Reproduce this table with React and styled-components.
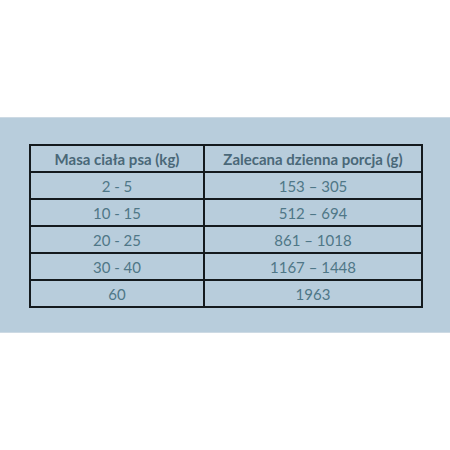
import styled, { createGlobalStyle } from "styled-components";

const GlobalStyle = createGlobalStyle`
  html, body {
    margin: 0;
    padding: 0;
    background: #ffffff;
  }
`;

const Page = styled.div`
  width: 450px;
  height: 450px;
  padding-top: 117px;
  box-sizing: border-box;
  background: #ffffff;
`;

const Band = styled.div`
  background: #b8cddc;
  border-top: 1px solid #cddae4;
  border-bottom: 1px solid #cddae4;
  padding: 26px 0 24px 29px;
`;

const Table = styled.table`
  width: 394px;
  border-collapse: collapse;
  font-family: Lato, "Open Sans", sans-serif;
  font-size: 15px;
  color: #4f7484;
`;

const Cell = styled.td`
  border: 2px solid #141a1e;
  height: 25px;
  padding: 0;
  text-align: center;
  vertical-align: middle;
  width: ${(props) => props.width || "auto"};
  font-weight: ${(props) => (props.head ? 700 : 400)};
  color: ${(props) => (props.head ? "#4a6878" : "#4f7787")};
`;

const rows = [
  ["2 - 5", "153 – 305"],
  ["10 - 15", "512 – 694"],
  ["20 - 25", "861 – 1018"],
  ["30 - 40", "1167 – 1448"],
  ["60", "1963"],
];

const App = () => {
  return (
    <Page>
      <GlobalStyle />
      <Band>
        <Table>
          <tbody>
            <tr>
              <Cell head width="172px">Masa ciała psa (kg)</Cell>
              <Cell head>Zalecana dzienna porcja (g)</Cell>
            </tr>
            {rows.map(([mass, portion]) => (
              <tr key={mass}>
                <Cell>{mass}</Cell>
                <Cell>{portion}</Cell>
              </tr>
            ))}
          </tbody>
        </Table>
      </Band>
    </Page>
  );
};

export default App;
